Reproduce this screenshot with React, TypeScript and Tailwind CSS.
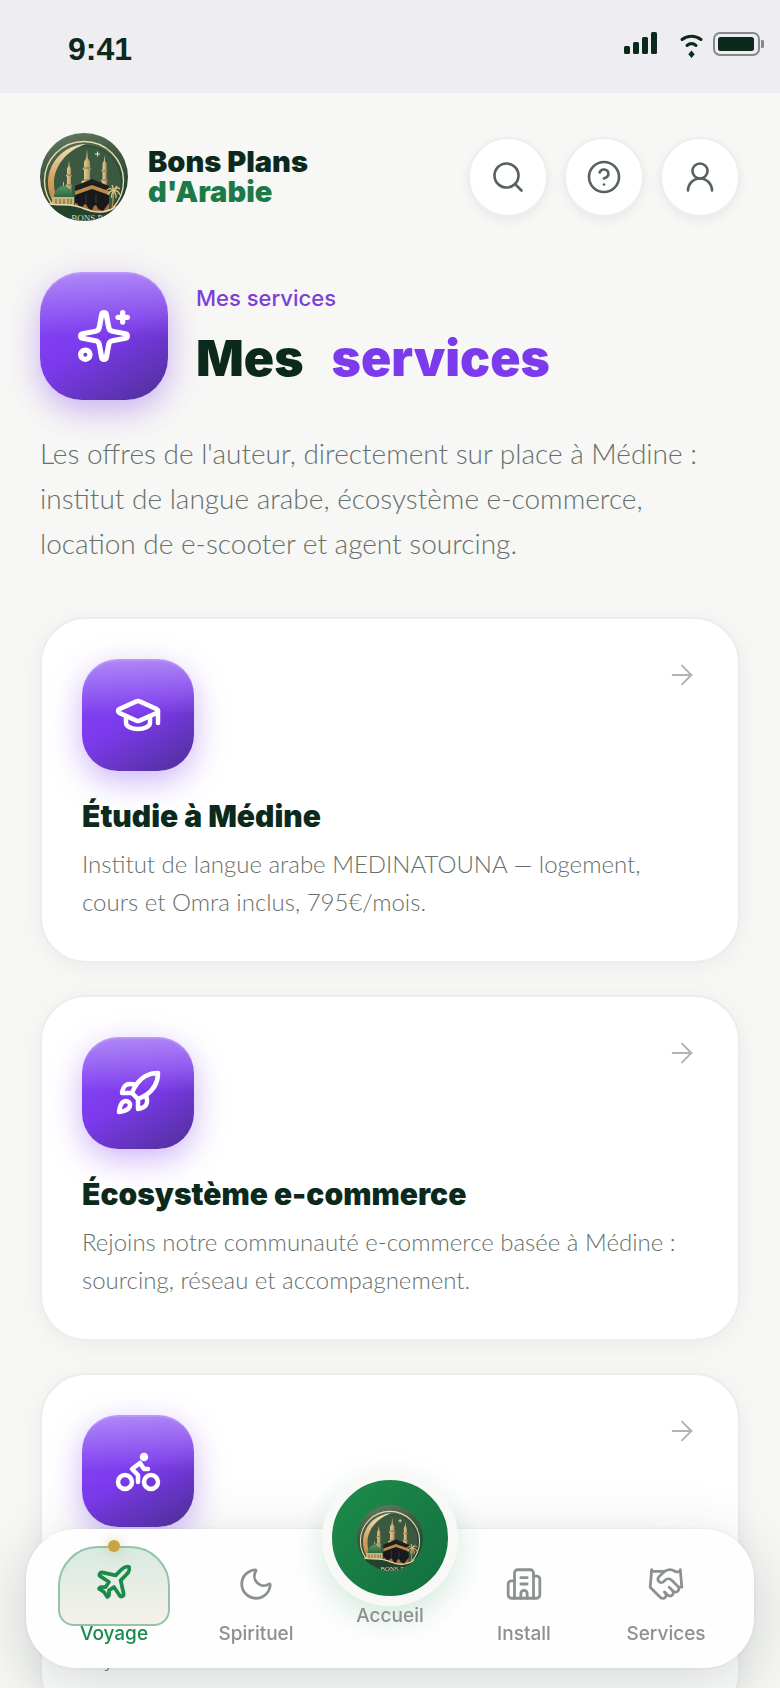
import type { ReactNode } from "react"
import {
  ArrowRight,
  Bike,
  Building2,
  CircleQuestionMark,
  GraduationCap,
  Handshake,
  Moon,
  Plane,
  Rocket,
  Search,
  Sparkles,
  UserRound,
  type LucideIcon,
} from "lucide-react"

type Service = {
  title: string
  body: string
  Icon: LucideIcon
}

const SERVICES: Service[] = [
  {
    title: "Étudie à Médine",
    body: "Institut de langue arabe MEDINATOUNA — logement, cours et Omra inclus, 795€/mois.",
    Icon: GraduationCap,
  },
  {
    title: "Écosystème e-commerce",
    body: "Rejoins notre communauté e-commerce basée à Médine : sourcing, réseau et accompagnement.",
    Icon: Rocket,
  },
  {
    title: "Location e-scooter",
    body: "Déplace-toi librement à Médine, à l'heure ou bien à la\u00a0journée.",
    Icon: Bike,
  },
]

/** Round emblem: crescent, minarets, green dome, Kaaba and palm. */
function Emblem({ id, className }: { id: string; className?: string }) {
  return (
    <svg viewBox="0 0 88 88" className={className} aria-hidden>
      <defs>
        <linearGradient id={`${id}-bg`} x1="0" y1="0" x2="0.3" y2="1">
          <stop offset="0" stopColor="#6b7f66" />
          <stop offset="0.35" stopColor="#465f46" />
          <stop offset="1" stopColor="#1f3d2a" />
        </linearGradient>
        <linearGradient id={`${id}-gold`} x1="0" y1="0" x2="0" y2="1">
          <stop offset="0" stopColor="#efe3b8" />
          <stop offset="0.55" stopColor="#d3a361" />
          <stop offset="1" stopColor="#b98343" />
        </linearGradient>
        <linearGradient id={`${id}-stone`} x1="0" y1="0" x2="1" y2="0">
          <stop offset="0" stopColor="#e9dba9" />
          <stop offset="0.5" stopColor="#cdb27a" />
          <stop offset="1" stopColor="#8f7a4a" />
        </linearGradient>
        <linearGradient id={`${id}-dome`} x1="0" y1="0" x2="0" y2="1">
          <stop offset="0" stopColor="#5f9468" />
          <stop offset="1" stopColor="#2c6940" />
        </linearGradient>
        <clipPath id={`${id}-clip`}>
          <circle cx="44" cy="44" r="44" />
        </clipPath>
      </defs>
      <g clipPath={`url(#${id}-clip)`}>
        <rect width="88" height="88" fill={`url(#${id}-bg)`} />
        <circle cx="44" cy="48" r="39.500" fill="none" stroke="#e6dcae" strokeWidth="1.400" />
        <circle cx="45" cy="49" r="36.500" fill="#3b5840" stroke="#2a4630" strokeWidth="1" />
        <path d="M46 11C24 12 8 29 8 50c0 10 4 18 8 23l5-3c-5-6-7-12-7-20C14 33 27 17 46 11z" fill={`url(#${id}-gold)`} />
        {/* minarets */}
        <g fill={`url(#${id}-stone)`}>
          <path d="M29 27l.7 6 1.300 2.500v6l1.200 1-1.200 1.500v7l1.500 1-1 2v12h-5V54l-1-2 1.500-1v-7l-1.200-1.500 1.200-1v-6l1.300-2.500z" />
          <path d="M47 16l.8 9 2.200 4v5l1.500 1.500-1.500 2v9l2.500 2v5H41.500v-5l2.500-2v-9l-1.500-2L44 34v-5l2.200-4z" />
          <path d="M64.500 22l.7 6 1.300 2.500v6l1.200 1-1.200 1.500v7l1.500 1-1 2v8h-5V49l-1-2 1.500-1v-7l-1.200-1.500 1.200-1v-6l1.300-2.500z" />
        </g>
        <path d="M27 42h4M26.500 52h5M43 35h8M42 47h10M62.500 38h4M62 47h5" stroke="#6f5a30" strokeWidth="0.800" />
        <path d="M57.500 18.500v5M55 21h5" stroke="#f3efd6" strokeWidth="0.900" />
        {/* Kaaba */}
        <path d="M35 54l17-7 17 7v24l-17 4-17-5z" fill="#17191c" />
        <path d="M35 58l17-6 17 6v4l-17-6-17 6z" fill="#b88a4c" />
        <path d="M35 53l17-7 17 7v4l-17-6-17 6z" fill="#211f1c" />
        <path d="M35 70c3-1 4 5 7 6 2-6 4-7 6-1l4 3c2-7 4-8 6-2l5 2 6-8v14H35z" fill="#a9703a" />
        <path d="M46 61v9M56 61v9" stroke="#4c4037" strokeWidth="0.800" />
        {/* dome */}
        <path d="M23.500 49v4" stroke="#d7bd7a" strokeWidth="1" />
        <path d="M14 64c0-6 4-10 9.500-11.500C29 54 33 58 33 64z" fill={`url(#${id}-dome)`} />
        <path d="M12 64h22v8H12z" fill="#cfb27a" />
        <path d="M16 66v5M20 66v5M24 66v5M28 66v5M31 66v5" stroke="#6f6238" strokeWidth="1" />
        {/* palm */}
        <path d="M74 58c-1 6-1 11-2 18" stroke="#a98b52" strokeWidth="1.500" fill="none" />
        <path
          d="M74 58c-2-3-5-3-7-1M74 58c-3-1-5 1-6 4M74 58c-2 2-3 4-2 7M74 58c1-3 4-4 6-2M74 58c3-1 5 1 6 4M74 58c1 2 3 4 2 7M74 58c-1-3-1-4-2-6M74 58c1-3 2-4 3-5"
          stroke="#dcc385"
          strokeWidth="1.300"
          fill="none"
        />
        <path d="M9 71c14 2 24-1 36 5 12 5 21 4 33-3l6 15H4z" fill="#24432d" />
        <path d="M9 71c14 2 24-1 36 5 12 5 21 4 33-3" stroke="#e8dcae" strokeWidth="1.500" fill="none" />
        <text x="47" y="88" textAnchor="middle" fontSize="9" fill="#d8dac4" fontFamily="Liberation Serif, serif">
          BONS P
        </text>
      </g>
    </svg>
  )
}

function StatusBar() {
  return (
    <div className="flex h-[93px] items-start justify-between bg-[#eeedf2] pl-[68px] pr-4">
      <span className="pt-[30px] font-['Liberation_Sans',sans-serif] text-[32px] font-bold leading-[38px]">9:41</span>
      <svg viewBox="0 0 140 28" className="mt-[30px] h-7 w-[140px]" aria-hidden>
        <rect x="0" y="16" width="6" height="8" rx="1.500" fill="currentColor" />
        <rect x="9" y="12" width="6" height="12" rx="1.500" fill="currentColor" />
        <rect x="18" y="7" width="6" height="17" rx="1.500" fill="currentColor" />
        <rect x="27" y="2" width="6" height="22" rx="1.500" fill="currentColor" />
        <g fill="none" stroke="currentColor" strokeWidth="3" strokeLinecap="round">
          <path d="M58 9.500c5.500-4.500 13.500-4.500 19 0" />
          <path d="M63 15.500c2.800-2.300 6.200-2.300 9 0" />
        </g>
        <path d="M67.500 20.500l3.200 3.800-3.200 3.700-3.200-3.700z" fill="currentColor" />
        <rect x="90" y="3" width="45" height="22" rx="6" fill="none" stroke="#838c8a" strokeWidth="2" />
        <rect x="94" y="7" width="36" height="14" rx="2.500" fill="currentColor" />
        <path d="M137 10h1.500a1.500 1.500 0 0 1 1.500 1.500v5a1.500 1.500 0 0 1-1.500 1.500H137z" fill="#838c8a" />
      </svg>
    </div>
  )
}

function RoundButton({ label, Icon }: { label: string; Icon: LucideIcon }) {
  return (
    <button
      type="button"
      aria-label={label}
      className="flex size-20 items-center justify-center rounded-full border-2 border-[#eeeeed] bg-white text-[#56635c] shadow-[0_4px_12px_rgba(11,42,28,0.06)]"
    >
      <Icon className="size-9" strokeWidth={1.75} />
    </button>
  )
}

function Tile({ size, children }: { size: "lg" | "md"; children: ReactNode }) {
  return (
    <span
      className={
        (size === "lg" ? "size-32 rounded-[42px]" : "size-28 rounded-[36px]") +
        " flex shrink-0 items-center justify-center text-white" +
        " bg-[linear-gradient(180deg,rgba(255,255,255,0.36)_0%,rgba(255,255,255,0)_50%),linear-gradient(150deg,#8548f5_0%,#7c3aed_50%,#4f2f96_100%)]" +
        " shadow-[0_10px_32px_rgba(124,58,237,0.38),inset_0_2px_1px_rgba(255,255,255,0.15)]"
      }
    >
      {children}
    </span>
  )
}

function ServiceCard({ s }: { s: Service }) {
  return (
    <a
      href="#"
      className="block rounded-[46px] border-2 border-[#ededec] bg-white p-10 shadow-[0_4px_24px_rgba(11,42,28,0.05)]"
    >
      <div className="flex items-start justify-between">
        <Tile size="md">
          <s.Icon className="size-12" strokeWidth={2.25} />
        </Tile>
        <ArrowRight className="size-8 text-[#b0b5b2]" strokeWidth={1.5} />
      </div>
      <h2 className="mt-6 text-[30px] font-black leading-[42px]">{s.title}</h2>
      <p className="mt-2 font-['Lato',sans-serif] text-[24px] font-light leading-[38px] text-[#66706b]">{s.body}</p>
    </a>
  )
}

function NavItem({ label, Icon }: { label: string; Icon: LucideIcon }) {
  return (
    <a href="#" className="flex min-w-0 flex-col items-center text-[#8b918e]">
      <span className="flex h-[76px] items-center">
        <Icon className="size-[38px]" strokeWidth={1.75} />
      </span>
      <span className="text-[19px] font-medium leading-6">{label}</span>
    </a>
  )
}

function BottomNav() {
  return (
    <nav className="fixed inset-x-[26px] bottom-5 grid h-[139px] grid-cols-[minmax(0,144fr)_minmax(0,140fr)_minmax(0,128fr)_minmax(0,140fr)_minmax(0,144fr)] rounded-[50px] bg-[#fefefe] px-4 pt-[17px] shadow-[0_16px_64px_rgba(11,42,28,0.18),0_0_4px_rgba(11,42,28,0.08)]">
      <a href="#" aria-current="page" className="flex min-w-0 flex-col items-center text-[#1b8a4b]">
        <span className="relative flex h-20 w-28 items-center justify-center rounded-t-[40px] rounded-b-[16px] border-2 border-[#93c4aa] bg-linear-to-b from-[#d8eae1] to-[#f5f1ea]">
          <span className="absolute -top-[8px] size-3 rounded-full bg-[#c9a441] shadow-[0_0_12px_rgba(201,164,65,0.5)]" />
          <Plane className="mb-2 size-10" strokeWidth={2.25} />
        </span>
        <span className="-mt-1 text-[19px] font-medium leading-6">Voyage</span>
      </a>
      <NavItem label="Spirituel" Icon={Moon} />
      <a href="#" className="-mt-[76px] flex min-w-0 flex-col items-center text-[#8b918e]">
        <span className="flex size-[136px] shrink-0 items-center justify-center rounded-full border-[10px] border-[#f8f9f7] bg-[linear-gradient(135deg,#1f8f4c,#116b3c)] bg-origin-border shadow-[0_12px_32px_rgba(27,138,75,0.18)]">
          <Emblem id="home" className="size-[66px]" />
        </span>
        <span className="-mt-[2px] text-[19px] font-medium leading-6">Accueil</span>
      </a>
      <NavItem label="Install" Icon={Building2} />
      <NavItem label="Services" Icon={Handshake} />
    </nav>
  )
}

export default function App() {
  return (
    <div className="h-screen overflow-hidden bg-[#f7f7f5] font-['Inter',sans-serif] text-[#0b2a1c]">
      <StatusBar />

      <header className="flex items-center justify-between px-10 pt-10">
        <a href="#" className="flex items-center gap-5">
          <Emblem id="brand" className="size-[88px]" />
          <span className="text-[29px] font-black leading-[30px]">
            Bons Plans
            <br />
            <span className="text-[#1b7a45]">d'Arabie</span>
          </span>
        </a>
        <div className="flex gap-4">
          <RoundButton label="Rechercher" Icon={Search} />
          <RoundButton label="Aide" Icon={CircleQuestionMark} />
          <RoundButton label="Compte" Icon={UserRound} />
        </div>
      </header>

      <main className="px-10 pt-[51px]">
        <div className="flex items-center gap-7">
          <Tile size="lg">
            <Sparkles className="size-14" strokeWidth={2.25} />
          </Tile>
          <div>
            <p className="text-[22px] font-medium leading-7 text-[#7c3fd8]">Mes services</p>
            <h1 className="mt-4 flex gap-7 text-[50px] font-black leading-[60px]">
              <span>Mes</span>
              <span className="text-[#7c3aed]">services</span>
            </h1>
          </div>
        </div>

        <p className="mt-[31px] font-['Lato',sans-serif] text-[28px] font-light leading-[45px] text-[#66706b]">
          Les offres de l'auteur, directement sur place à Médine : institut de langue arabe,
          écosystème e-commerce, location de e-scooter et agent sourcing.
        </p>

        <div className="mt-[51px] flex flex-col gap-8">
          {SERVICES.map((s) => (
            <ServiceCard key={s.title} s={s} />
          ))}
        </div>
      </main>

      <BottomNav />
    </div>
  )
}
